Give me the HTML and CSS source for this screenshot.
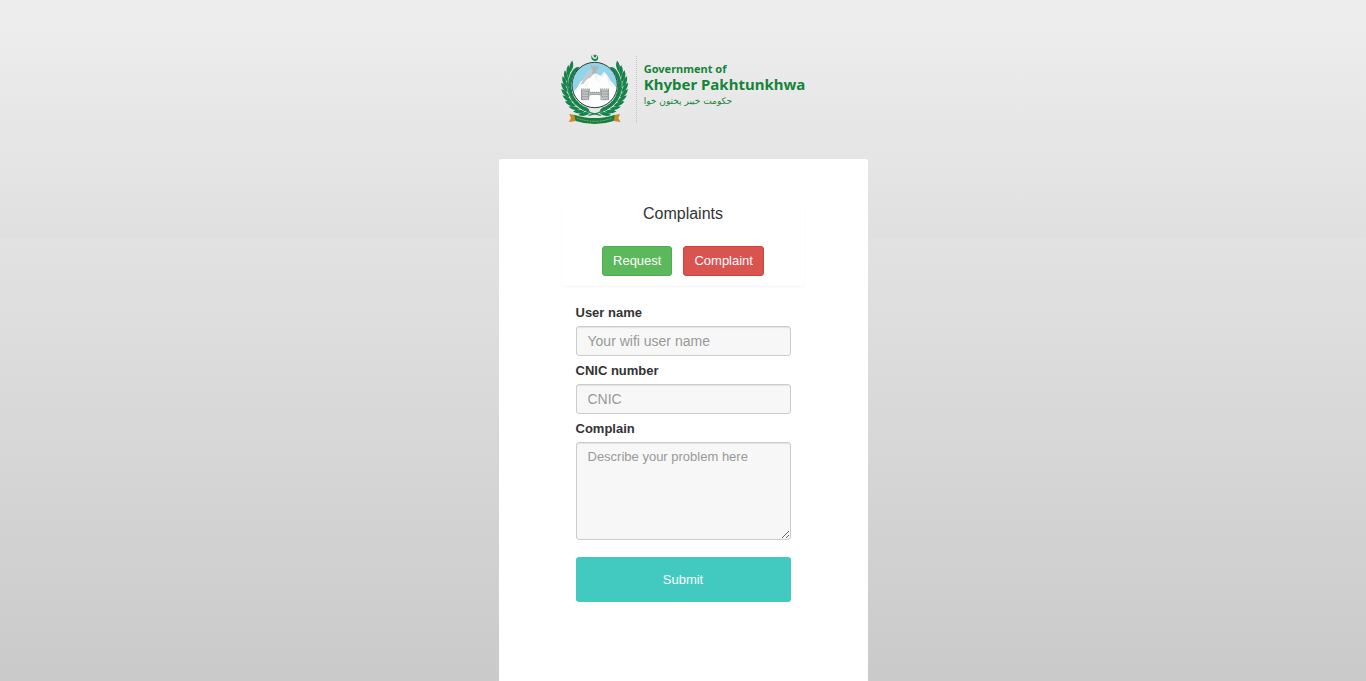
FILE: index.html
```html
<!DOCTYPE html>
<html lang="en">
<head>
<meta charset="utf-8">
<meta name="viewport" content="width=device-width, initial-scale=1">
<title>Complaints</title>
<link rel="stylesheet" href="styles.css">
</head>
<body class="page">
<header class="brand">
  <svg class="emblem" viewBox="24 24 204 216" aria-hidden="true">
    <defs>
      <g id="leaves" fill="#16834a">
        <path d="M129 205q-9 17-32 14q9-16 32-14z"/>
        <path d="M129 202q-8-14-27-12q6 14 27 12z"/>
      </g>
      <clipPath id="disc"><circle cx="125" cy="120" r="67"/></clipPath>
      <g id="branch">
        <path d="M144 211Q84 202 58 167Q31 125 52 76" fill="none" stroke="#16834a" stroke-width="3"/>
        <use href="#leaves" transform="rotate(13 125 122)"/>
        <use href="#leaves" transform="rotate(24 125 122)"/>
        <use href="#leaves" transform="rotate(35 125 122)"/>
        <use href="#leaves" transform="rotate(46 125 122)"/>
        <use href="#leaves" transform="rotate(57 125 122)"/>
        <use href="#leaves" transform="rotate(68 125 122)"/>
        <use href="#leaves" transform="rotate(79 125 122)"/>
        <use href="#leaves" transform="rotate(90 125 122)"/>
        <use href="#leaves" transform="rotate(101 125 122)"/>
        <use href="#leaves" transform="rotate(112 125 122)"/>
        <use href="#leaves" transform="rotate(122 125 122)"/>
      </g>
    </defs>
    <use href="#branch"/>
    <use href="#branch" transform="translate(250 0) scale(-1 1)"/>
    <circle cx="125" cy="120" r="68" fill="#94d4e8"/>
    <g clip-path="url(#disc)">
      <path d="M50 155L74 126L82 111L91 105L105 82L119 73L131 86L143 93L153 80L164 92L173 108L185 121L205 150V200H50z" fill="#fdfdfd"/>
      <path d="M82 118L91 105L105 82L119 73L131 84L120 89L112 98L102 103L91 117z" fill="#c3c8ca"/>
      <path d="M131 86L128 99L139 110M153 80L148 97M164 92L168 113L180 124M106 110L96 124M73 132L63 147" fill="none" stroke="#dcdcdc" stroke-width="2"/>
    </g>
    <circle cx="125" cy="120" r="68" fill="none" stroke="#303b3a" stroke-width="3"/>
    <path d="M112 57L121 66L124 58L129 67L138 60L134 72L128 78L131 85L124 83L117 88L120 77L115 69z" fill="#a9b5b8"/>
    <path d="M84 133h27v8h30v-8h27v33h-23v-9q-2-7-10-7h-17q-8 0-10 7v9H84z" fill="#c2c5c6"/>
    <path d="M84 132h27M141 132h27M110 142h32M88 139h19M145 139h20M88 147h19M145 147h20M88 155h16M147 155h17M88 163h14M149 163h14M112 148h28" stroke="#6c7374" stroke-width="2" stroke-dasharray="4 2" fill="none"/>
    <path d="M86 134v31M107 134v31M144 134v31M166 134v31" stroke="#777d7e" stroke-width="2"/>
    <path d="M118 28C110 40 119 49 127 48C137 47 138 36 132 30C135 39 129 43 124 42C118 41 115 35 118 28z" fill="#16834a"/>
    <path d="M126 27l2 4 4 0-3 3 1 4-4-2-4 2 1-4-3-3 4 0z" fill="#16834a"/>
    <path d="M109 211L145 200M105 200L141 211" stroke="#16834a" stroke-width="2"/>
    <path d="M49 207L63 209L75 221L65 229L47 231L54 220zM201 207L187 209L175 221L185 229L203 231L196 220z" fill="#c98b28"/>
    <path d="M64 209Q93 219 125 219T186 209L182 228Q155 237 125 237T68 228z" fill="#157c43"/>
    <path d="M72 219Q98 229 125 229T178 219" fill="none" stroke="#a3b861" stroke-width="3" stroke-dasharray="4 2 2 2"/>
  </svg>
  <div class="brand-text">
    <span class="brand-small">Government of</span>
    <span class="brand-name">Khyber Pakhtunkhwa</span>
    <span class="brand-urdu" lang="ur" dir="rtl">حکومت خیبر پختون خوا</span>
  </div>
</header>
<main class="panel">
  <section class="choices">
    <h1 class="title">Complaints</h1>
    <div class="buttons">
      <button class="button request" type="button">Request</button>
      <button class="button complaint" type="button">Complaint</button>
    </div>
  </section>
  <form class="form">
    <label class="label" for="user">User name</label>
    <input class="field" id="user" type="text" placeholder="Your wifi user name">
    <label class="label" for="cnic">CNIC number</label>
    <input class="field" id="cnic" type="text" placeholder="CNIC">
    <label class="label" for="complain">Complain</label>
    <textarea class="field area" id="complain" placeholder="Describe your problem here"></textarea>
    <button class="submit" type="submit">Submit</button>
  </form>
</main>
</body>
</html>
```
FILE: styles.css
```css
* {
  box-sizing: border-box;
}

.page {
  display: flex;
  flex-direction: column;
  align-items: center;
  min-height: 100vh;
  margin: 0;
  background: linear-gradient(#eee, #e0e0e0 35%, #e2e2e2 35%, #cacaca);
  color: #333;
  font: 13px/18px "Liberation Sans", Arial, sans-serif;
}

.brand {
  display: flex;
  gap: 7px;
  padding: 53px 0 34px;
}

.emblem {
  width: 68px;
  height: 72px;
}

.brand-text {
  display: flex;
  flex-direction: column;
  align-items: flex-start;
  margin: 3px 0 2px;
  padding: 5px 0 0 7px;
  border-left: 1px dotted #c4c4c4;
  color: #16843a;
  white-space: nowrap;
}

.brand-small {
  font: bold 11px/15px "Noto Sans", sans-serif;
}

.brand-name {
  font: bold 15px/16px "Noto Sans", sans-serif;
}

.brand-urdu {
  font: 9px/18px "DejaVu Sans", sans-serif;
}

.panel {
  flex: 1;
  width: 27%;
  min-width: 369px;
  padding: 45px 63px 79px;
  border-radius: 2px 2px 0 0;
  background: #fff;
}

.choices {
  padding-bottom: 10px;
  border-radius: 4px;
  box-shadow: 0 1px 2px rgba(0, 0, 0, 0.05);
  text-align: center;
}

.title {
  margin: 0 0 23px;
  font-size: 16px;
  font-weight: normal;
  line-height: 19px;
}

.buttons {
  display: flex;
  justify-content: center;
  gap: 11px;
}

.button {
  height: 30px;
  padding: 0 10px;
  border: 1px solid;
  border-radius: 3px;
  color: #fff;
  font: 13px/18px "Liberation Sans", Arial, sans-serif;
}

.request {
  border-color: #4cae4c;
  background: #5cb85c;
}

.complaint {
  border-color: #d43f3a;
  background: #d9534f;
}

.form {
  display: flex;
  flex-direction: column;
  padding: 18px 14px 0;
}

.label {
  margin-bottom: 4px;
  font-weight: bold;
}

.field {
  width: 100%;
  height: 30px;
  margin: 0 0 6px;
  padding: 5px 11px;
  border: 1px solid #ccc;
  border-radius: 3px;
  background: #f7f7f7;
  box-shadow: inset 0 1px 1px rgba(0, 0, 0, 0.08);
  color: #555;
  font: 14px/18px "Liberation Sans", Arial, sans-serif;
}

.field::placeholder {
  color: #999;
}

.area {
  height: 98px;
  margin-bottom: 17px;
  font-size: 13px;
  resize: both;
}

.submit {
  height: 45px;
  border: 0;
  border-radius: 3px;
  background: #42cac0;
  color: #fff;
  font: 13px/18px "Liberation Sans", Arial, sans-serif;
}
```
